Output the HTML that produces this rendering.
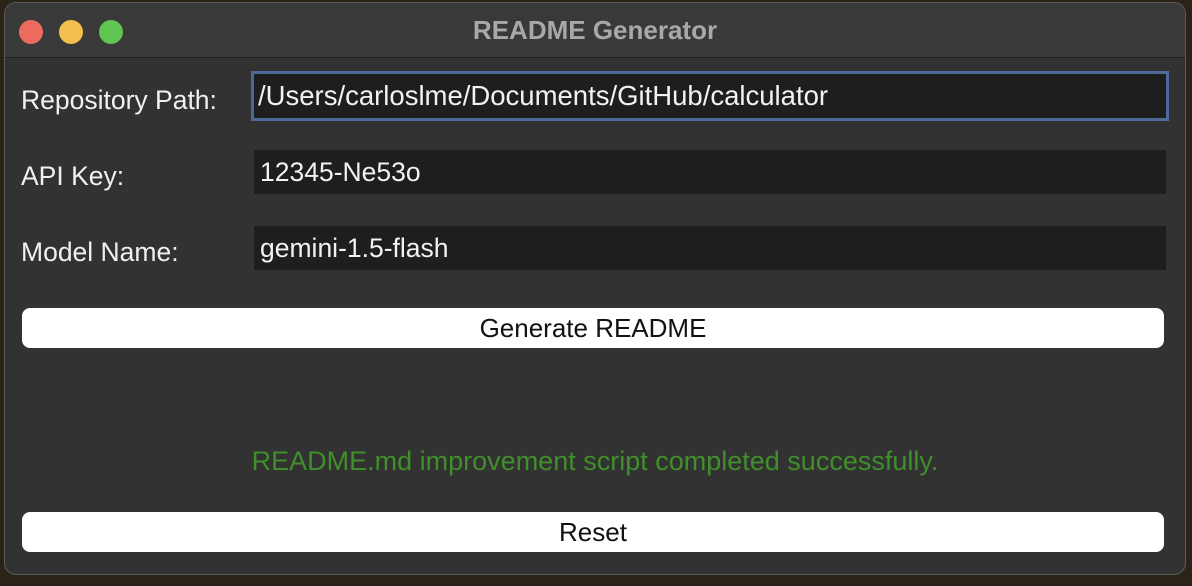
<!DOCTYPE html>
<html><head><style>
body{margin:0;width:1192px;height:586px;background:#2a2418;position:relative;overflow:hidden;font-family:"Liberation Sans",sans-serif}
.win{position:absolute;left:4px;top:2px;width:1182px;height:573px;background:#323232;border-radius:12px;border:1px solid #5a5a5a;box-sizing:border-box;overflow:hidden}
.tb{height:54px;background:#393939;border-bottom:1px solid #1e1e1e;position:relative}
.tb .t{position:absolute;left:0;right:0;top:12px;text-align:center;color:#a8a8a8;font-weight:bold;font-size:26px}
.d{position:absolute;top:17px;width:24px;height:24px;border-radius:50%}
.lbl{position:absolute;left:16px;color:#f0f0f0;font-size:26.5px}
.f{position:absolute;background:#1e1e1e;color:#f2f2f2;font-size:26.5px;box-sizing:border-box;padding-left:6px;line-height:44px}
.btn{position:absolute;left:17px;width:1142px;height:40px;background:#fff;border-radius:8px;color:#111;font-size:26px;text-align:center;line-height:40px}
</style></head><body>
<div class="win">
<div class="tb"><div class="d" style="left:14px;background:#ed6a5e"></div><div class="d" style="left:54px;background:#f5bf4f"></div><div class="d" style="left:94px;background:#61c554"></div><div class="t">README Generator</div></div>
<div class="lbl" style="top:82px">Repository Path:</div>
<div class="f" style="left:246px;top:68px;width:918px;height:50px;border:3px solid #4a6a9a;line-height:44px;padding-left:4px;font-size:27.5px">/Users/carloslme/Documents/GitHub/calculator</div>
<div class="lbl" style="top:158px">API Key:</div>
<div class="f" style="left:249px;top:147px;width:912px;height:44px">12345-Ne53o</div>
<div class="lbl" style="top:234px">Model Name:</div>
<div class="f" style="left:249px;top:223px;width:912px;height:44px">gemini-1.5-flash</div>
<div class="btn" style="top:305px">Generate README</div>
<div style="position:absolute;left:0;right:0;top:443px;text-align:center;color:#3f8f2a;font-size:27px">README.md improvement script completed successfully.</div>
<div class="btn" style="top:509px">Reset</div>
</div>
</body></html>
